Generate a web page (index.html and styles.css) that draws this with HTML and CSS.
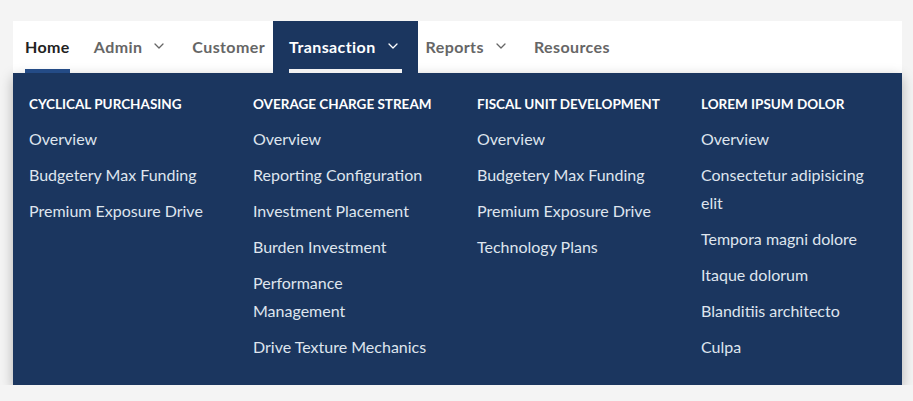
FILE: index.html
```html
<!DOCTYPE html>
<html lang="en">
<head>
<meta charset="utf-8">
<title>Navigation</title>
<link rel="stylesheet" href="styles.css">
</head>
<body>
<div class="page">
  <nav class="navbar">
    <a class="nav-item is-current" href="#"><span class="nav-label">Home</span></a>
    <a class="nav-item" href="#"><span class="nav-label">Admin<svg class="chev" viewBox="0 0 10 6" width="10" height="6"><polyline points="1,1 5,5 9,1"/></svg></span></a>
    <a class="nav-item" href="#"><span class="nav-label">Customer</span></a>
    <a class="nav-item is-open" href="#"><span class="nav-label">Transaction<svg class="chev" viewBox="0 0 10 6" width="10" height="6"><polyline points="1,1 5,5 9,1"/></svg></span></a>
    <a class="nav-item" href="#"><span class="nav-label">Reports<svg class="chev" viewBox="0 0 10 6" width="10" height="6"><polyline points="1,1 5,5 9,1"/></svg></span></a>
    <a class="nav-item" href="#"><span class="nav-label">Resources</span></a>
  </nav>
  <div class="mega">
    <section class="mega-col">
      <h3 class="mega-title">Cyclical Purchasing</h3>
      <ul class="mega-list">
        <li><a href="#">Overview</a></li>
        <li><a href="#">Budgetery Max Funding</a></li>
        <li><a href="#">Premium Exposure Drive</a></li>
      </ul>
    </section>
    <section class="mega-col">
      <h3 class="mega-title">Overage Charge Stream</h3>
      <ul class="mega-list">
        <li><a href="#">Overview</a></li>
        <li><a href="#">Reporting Configuration</a></li>
        <li><a href="#">Investment Placement</a></li>
        <li><a href="#">Burden Investment</a></li>
        <li><a href="#">Performance Management</a></li>
        <li><a href="#">Drive Texture Mechanics</a></li>
      </ul>
    </section>
    <section class="mega-col">
      <h3 class="mega-title">Fiscal Unit Development</h3>
      <ul class="mega-list">
        <li><a href="#">Overview</a></li>
        <li><a href="#">Budgetery Max Funding</a></li>
        <li><a href="#">Premium Exposure Drive</a></li>
        <li><a href="#">Technology Plans</a></li>
      </ul>
    </section>
    <section class="mega-col">
      <h3 class="mega-title">Lorem Ipsum Dolor</h3>
      <ul class="mega-list">
        <li><a href="#">Overview</a></li>
        <li><a href="#">Consectetur adipisicing elit</a></li>
        <li><a href="#">Tempora magni dolore</a></li>
        <li><a href="#">Itaque dolorum</a></li>
        <li><a href="#">Blanditiis architecto</a></li>
        <li><a href="#">Culpa</a></li>
      </ul>
    </section>
  </div>
</div>
</body>
</html>
```

FILE: styles.css
```css
* { box-sizing: border-box; }

html, body {
  margin: 0;
  padding: 0;
  background: #f4f4f4;
  font-family: "Lato", "Noto Sans", sans-serif;
}

.page {
  margin: 21px 11px 0 13px;
  width: 889px;
}

.navbar {
  display: flex;
  align-items: stretch;
  height: 52px;
  background: #ffffff;
}

.nav-item {
  display: flex;
  align-items: stretch;
  padding: 0 12px;
  text-decoration: none;
  color: #666666;
  font-weight: 700;
  font-size: 16px;
  letter-spacing: 0.4px;
}

.nav-label {
  position: relative;
  display: flex;
  align-items: center;
  padding-bottom: 2px;
}

.nav-item.is-current { color: #222222; }

.nav-item.is-current .nav-label::after,
.nav-item.is-open .nav-label::after {
  content: "";
  position: absolute;
  left: 0;
  right: 0;
  bottom: 0;
  height: 4px;
  background: #244b86;
}

.nav-item.is-open {
  background: #1b365f;
  color: #ffffff;
  padding: 0 16px;
  margin: 0 -4px;
}

.nav-item.is-open .nav-label::after { background: #f2f2f2; }

.chev {
  margin-left: 12px;
  margin-right: 4px;
  fill: none;
  stroke: currentColor;
  stroke-width: 1.3;
  stroke-linecap: round;
  stroke-linejoin: round;
}

.mega {
  display: grid;
  grid-template-columns: repeat(4, 180px);
  column-gap: 44px;
  padding: 21px 16px 24px;
  background: #1b365f;
  box-shadow: 0 4px 12px rgba(0, 0, 0, 0.28);
}

.mega-title {
  margin: 0 0 11px;
  font-size: 13.5px;
  line-height: 20px;
  font-weight: 700;
  text-transform: uppercase;
  white-space: nowrap;
  color: #ffffff;
}

.mega-list {
  list-style: none;
  margin: 0;
  padding: 0;
  display: flex;
  flex-direction: column;
  gap: 8px;
}

.mega-list a {
  display: block;
  font-size: 16px;
  line-height: 28px;
  color: #dfe5ee;
  text-decoration: none;
}
```
